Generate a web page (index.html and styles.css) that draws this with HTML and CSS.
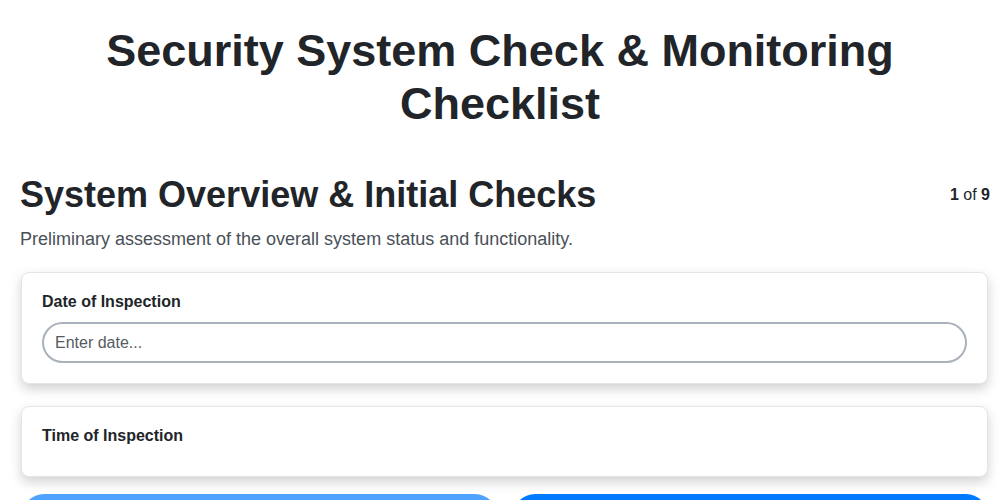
FILE: index.html
```html
<!DOCTYPE html>
<html lang="en">
<head>
    <meta charset="UTF-8">
    <title>Security System Check &amp; Monitoring Checklist</title>
    <link rel="stylesheet" href="styles.css">
</head>
<body>
    <div class="page">
        <!-- title -->
        <h1 class="title">Security System Check &amp; Monitoring Checklist</h1>

        <!-- section head -->
        <div class="section-head">
            <h2 class="section-title">System Overview &amp; Initial Checks</h2>
            <div class="step"><b>1</b> of <b>9</b></div>
        </div>
        <p class="section-desc">Preliminary assessment of the overall system status and functionality.</p>

        <!-- questions -->
        <div class="questions">
            <div class="card">
                <label class="label" for="date">Date of Inspection</label>
                <input class="field" id="date" type="text" placeholder="Enter date...">
            </div>
            <div class="card">
                <label class="label">Time of Inspection</label>
            </div>
        </div>

        <!-- nav buttons -->
        <div class="nav">
            <button class="btn btn-prev">Previous</button>
            <button class="btn btn-next">Next</button>
        </div>
    </div>
</body>
</html>
```

FILE: styles.css
```css
*{
    margin: 0;
    padding: 0;
    box-sizing: border-box;
}
body{
    font-family: "Liberation Sans", Arial, sans-serif;
    color: #212529;
    background: #fff;
}
.page{
    padding: 24px 10px 20px 20px;
}
.title{
    font-size: 45px;
    line-height: 53px;
    text-align: center;
    font-weight: bold;
    margin: 0 20px 43px 10px;
}
.section-head{
    display: flex;
    justify-content: space-between;
    align-items: center;
}
.section-title{
    font-size: 36px;
    line-height: 43px;
    font-weight: bold;
}
.step{
    font-size: 16px;
}
.section-desc{
    font-size: 18px;
    line-height: 27px;
    color: #495057;
    margin-top: 10px;
    margin-bottom: 19px;
}
/* question cards */
.questions{
    display: flex;
    flex-direction: column;
    gap: 22px;
    margin: 0 2px 17px 1px;
}
.card{
    border: 1px solid #e4e4ea;
    border-radius: 8px;
    padding: 19px 20px 20px;
    background: #fff;
    box-shadow: 0 5px 12px rgba(0, 0, 0, 0.18);
}
.label{
    display: block;
    font-size: 16px;
    font-weight: bold;
    line-height: 20px;
    margin-bottom: 10px;
}
.field{
    display: block;
    width: 100%;
    height: 41px;
    border: 2px solid #a9b1ba;
    border-radius: 21px;
    padding: 0 11px;
    font-family: inherit;
    font-size: 16px;
    color: #212529;
    outline: none;
}
.field::placeholder{
    color: #555b62;
}
.nav{
    display: flex;
    gap: 16px;
    margin: 0 2px 0 2px;
}
.btn{
    flex: 1;
    height: 44px;
    border: none;
    border-radius: 22px;
    color: #fff;
    font-family: inherit;
    font-size: 16px;
    font-weight: bold;
}
.btn-prev{
    background: #4da3ff;
}
.btn-next{
    background: #007bff;
}
```
